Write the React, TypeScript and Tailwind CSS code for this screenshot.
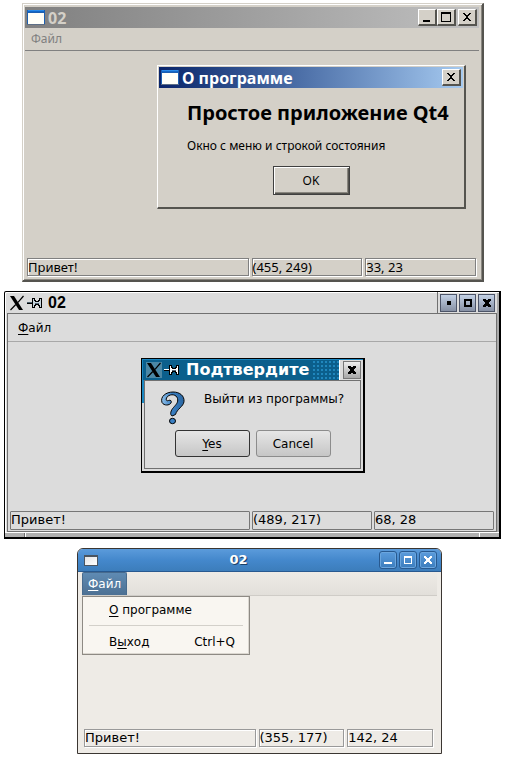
import type { ReactNode } from "react";

function MiniWindowIcon({ className }: { className: string }) {
  return (
    <svg viewBox="0 0 18 15" className={className} aria-hidden="true" shapeRendering="crispEdges">
      <rect width="18" height="15" fill="#1c5fb0" />
      <rect x="1" width="16" height="1" fill="#2a8ae8" />
      <rect x="1" y="1" width="16" height="1" fill="#1268c8" />
      <rect x="1" y="3" width="16" height="11" fill="#fffff8" />
      <rect y="14" width="18" height="1" fill="#5d6f86" />
    </svg>
  );
}

function XLogo({ className }: { className: string }) {
  return (
    <svg viewBox="0 0 16 16" className={className} aria-hidden="true">
      <path d="M1 1h4l9 14h-4z" fill="#000" />
      <path d="M14.5 1L9 7.3M6.8 9.5L1.5 15" stroke="#000" strokeWidth="1.2" fill="none" />
    </svg>
  );
}

function PinIcon({ dark }: { dark?: boolean }) {
  const light = dark ? "#fff" : "#c9d6de";
  return (
    <svg viewBox="0 0 15 10" className="h-[10px] w-[15px] shrink-0" aria-hidden="true" shapeRendering="crispEdges">
      <path d="M0 5h6v1H0z" fill="#000" />
      <path d="M0 4h6v1H0z" fill={dark ? "#fff" : "#4a5f6c"} />
      <path d="M5 0h3v2h1v1h2V2h1V0h3v10h-3V8h-1V7H9v1H8v2H5z" fill="#000" />
      <path d="M6 1h1v2h1v1h4V3h1V1h1v8h-1V7h-1V6H8v1H7v2H6z" fill={light} />
      <path d="M8 5h4v1H8z" fill="#567" />
    </svg>
  );
}

function QuestionIcon() {
  return (
    <svg viewBox="0 0 26 34" className="h-[34px] w-[26px] shrink-0" aria-hidden="true">
      <defs>
        <linearGradient id="q" x1="0" y1="0" x2="1" y2="0">
          <stop offset="0" stopColor="#8fc0ea" />
          <stop offset="0.45" stopColor="#3a80c4" />
          <stop offset="1" stopColor="#2a66a0" />
        </linearGradient>
      </defs>
      <path
        d="M11 12C9.500 14.500 4 15 2 11.500C0 5.500 6 1 13 1C20 1 24.500 5 24 10.500C23.500 15.500 17 18 15.500 23.500L12 25C9.500 23.500 11 19 13.500 16.500C16 13.500 18.500 11.500 17.500 7.500C16.500 3.500 11 2.500 7.500 5.500C5 8.500 6.500 10.500 8.500 9.500C10.500 8.500 12 10 11 12Z"
        fill="url(#q)"
        stroke="#000"
        strokeWidth="1"
      />
      <ellipse cx="12.500" cy="30" rx="3" ry="2.700" fill="#3a80c4" stroke="#000" />
    </svg>
  );
}

type Glyph = "min" | "max" | "close";

function ClassicButton({ glyph, label }: { glyph: Glyph; label: string }) {
  return (
    <button
      type="button"
      aria-label={label}
      className="flex h-[17px] w-[19px] items-center justify-center border-t border-r-2 border-b-2 border-l border-t-white border-r-[#55544f] border-b-[#55544f] border-l-white bg-[#d4d0c8]"
    >
      <svg viewBox="0 0 12 12" className="size-3 shrink-0" aria-hidden="true" shapeRendering="crispEdges">
        {glyph === "min" && <path d="M2 9h7v2H2z" />}
        {glyph === "max" && <path d="M1 1h10v10H1zM2 3v7h8V3z" fillRule="evenodd" />}
        {glyph === "close" && (
          <path d="M2 2h2v1h1v1h2V3h1V2h2v1H9v1H8v1H7v2h1v1h1v1h1v1H8V9H7V8H5v1H4v1H2V9h1V8h1V7h1V5H4V4H3V3H2z" />
        )}
      </svg>
    </button>
  );
}

function WmButton({ glyph, label, plain }: { glyph: Glyph; label: string; plain?: boolean }) {
  return (
    <button
      type="button"
      aria-label={label}
      className={
        plain
          ? "flex size-[18px] items-center justify-center border border-[#777] bg-linear-to-b from-[#eee] to-[#a8a8a8]"
          : "flex h-[18px] w-[17px] items-center justify-center border border-[#4c5468] bg-linear-to-b from-[#c4d2e6] to-[#8690a4]"
      }
    >
      <svg viewBox="0 0 8 8" className="size-2 shrink-0" aria-hidden="true" shapeRendering="crispEdges">
        {glyph === "min" && <path d="M2 2h4v4H2z" />}
        {glyph === "max" && <path d="M0 0h8v8H0zM2 2v4h4V2z" fillRule="evenodd" />}
        {glyph === "close" && <path d="M0 0h3v1h2V0h3v2H7v1H6v2h1v1h1v2H5V7H3v1H0V6h1V5h1V3H1V2H0z" />}
      </svg>
    </button>
  );
}

function BlueButton({ glyph, label }: { glyph: Glyph; label: string }) {
  return (
    <button
      type="button"
      aria-label={label}
      className="flex size-[18px] items-center justify-center rounded-[3px] border border-[#28598f] bg-linear-to-b from-[#5a9bdc] to-[#3c7dbd] shadow-[inset_0_0_0_1px_#6ba6de]"
    >
      <svg viewBox="0 0 8 8" className="size-2 shrink-0" aria-hidden="true" fill="#fff" shapeRendering="crispEdges">
        {glyph === "min" && <path d="M0 6h8v2H0z" />}
        {glyph === "max" && <path d="M0 0h8v8H0zM1 2v5h6V2z" fillRule="evenodd" />}
        {glyph === "close" && <path d="M0 0h2v1h1v1h2V1h1V0h2v2H7v1H6v2h1v1h1v2H6V7H5V6H3v1H2v1H0V6h1V5h1V3H1V2H0z" />}
      </svg>
    </button>
  );
}

function StatusBar({ items, cell, bar }: { items: string[]; cell: string; bar: string }) {
  return (
    <footer className={`grid grid-cols-[2fr_1fr_1fr] ${bar}`}>
      {items.map((text) => (
        <span key={text} className={`border whitespace-nowrap ${cell}`}>
          {text}
        </span>
      ))}
    </footer>
  );
}

function Mnemonic({ children }: { children: ReactNode }) {
  return <u className="underline decoration-1 underline-offset-2">{children}</u>;
}

function AboutDialog() {
  return (
    <div
      role="dialog"
      aria-label="О программе"
      className="absolute top-[61px] right-[16px] w-[309px] border-t border-r-2 border-b-2 border-l border-t-white border-r-[#55544f] border-b-[#55544f] border-l-white bg-[#d4d0c8] p-px pb-3 text-black"
    >
      <div className="flex h-[21px] items-center gap-[3px] bg-linear-to-r from-[#0a246a] to-[#a6caf0] pr-[2px] pl-[2px]">
        <MiniWindowIcon className="h-[15px] w-[18px]" />
        <h2 className="flex-1 text-[16px] leading-5 font-bold text-white">О программе</h2>
        <ClassicButton glyph="close" label="Закрыть" />
      </div>
      <div className="pl-7">
        <h3 className="mt-[11px] text-[20px] leading-7 font-bold whitespace-nowrap">Простое приложение Qt4</h3>
        <p className="mt-[9px] text-[12px] leading-5">Окно с меню и строкой состояния</p>
      </div>
      <div className="mt-[10px] flex justify-center">
        <button
          type="button"
          className="h-[29px] w-[77px] border border-[#404040] bg-[#d4d0c8] text-[12px] shadow-[inset_1px_1px_0_#fff,inset_-1px_-1px_0_#55544f,inset_-2px_-2px_0_#8a8780]"
        >
          OK
        </button>
      </div>
    </div>
  );
}

function ClassicWindow() {
  return (
    <section className="relative mr-[21px] ml-[22px] border-t border-r-2 border-b-2 border-l border-t-[#d4d0c8] border-r-[#55544f] border-b-[#55544f] border-l-[#d4d0c8] bg-[#d4d0c8] pr-[3px] pb-[4px] pl-[2px] font-['Noto_Sans','Open_Sans',sans-serif] shadow-[inset_1px_1px_0_#fff,inset_-1px_-1px_0_#8a8780]">
      <div className="mt-[3px] flex h-[21px] items-center bg-linear-to-r from-[#808080] to-[#c0c0c0] pr-[2px] pl-[2px]">
        <MiniWindowIcon className="h-[15px] w-[18px]" />
        <h1 className="ml-[3px] flex-1 text-[16px] leading-5 font-bold text-[#d4d0c8]">02</h1>
        <ClassicButton glyph="min" label="Свернуть" />
        <ClassicButton glyph="max" label="Развернуть" />
        <span className="w-[2px]" />
        <ClassicButton glyph="close" label="Закрыть" />
      </div>
      <nav className="flex h-[23px] items-center border-b border-[#808080] pl-[6px]">
        <button type="button" disabled className="text-[12px] leading-4 text-[#808080]">
          Файл
        </button>
      </nav>
      <div className="h-[207px]" />
      <StatusBar
        items={["Привет!", "(455, 249)", "33, 23"]}
        bar="ml-[2px] mr-[3px] gap-[3px]"
        cell="h-[18px] border-[#808080] text-[13px] leading-[17px] shadow-[1px_1px_0_#fff,inset_1px_1px_0_#fff]"
      />
      <AboutDialog />
    </section>
  );
}

function ConfirmDialog() {
  return (
    <div
      role="dialog"
      aria-label="Подтвердите"
      className="absolute top-[66px] left-[136px] w-[224px] border border-r-2 border-b-2 border-black bg-[#dcdcdc] bg-[linear-gradient(#1a86c0,#1a86c0)] bg-size-[2px_44px] bg-no-repeat pr-[2px] pb-[2px]"
    >
      <div className="-mr-[2px] flex h-[21px] items-stretch border-t border-l border-[#1a86c0] bg-[#0b5f8c]">
        <div className="flex min-w-0 flex-1 items-center pl-[3px]">
          <span className="bg-[#4b87a5]">
            <XLogo className="size-4" />
          </span>
          <span className="ml-[2px]">
            <PinIcon dark />
          </span>
          <h2 className="ml-[7px] text-[16px] leading-5 font-bold text-white">Подтвердите</h2>
          <span className="ml-[3px] h-5 flex-1 bg-[radial-gradient(#2087bd_1px,transparent_1px)] bg-size-[4px_4px]" />
        </div>
        <div className="flex w-6 items-center justify-center border-l border-white bg-[#dcdcdc]">
          <WmButton glyph="close" label="Закрыть" plain />
        </div>
      </div>
      <div className="ml-[2px] border border-[#707070] pt-[8px] pb-[11px]">
        <div className="flex pl-[15px]">
          <span className="mt-[2px]">
            <QuestionIcon />
          </span>
          <p className="ml-[18px] text-[12px] leading-5 whitespace-nowrap">Выйти из программы?</p>
        </div>
        <div className="mt-[5px] flex justify-center gap-[6px]">
          <button
            type="button"
            className="h-[27px] w-[75px] rounded-[3px] border border-[#333] bg-linear-to-b from-[#e6e6e6] to-[#c6c6c6] text-[12px]"
          >
            <Mnemonic>Y</Mnemonic>es
          </button>
          <button
            type="button"
            className="h-[27px] w-[75px] rounded-[3px] border border-[#8c8c8c] bg-linear-to-b from-[#e6e6e6] to-[#c6c6c6] text-[12px]"
          >
            Cancel
          </button>
        </div>
      </div>
    </div>
  );
}

function WmWindow() {
  return (
    <section className="relative mt-[9px] mr-1 ml-1 rounded-tl-[2px] border border-r-2 border-b-2 border-black bg-[#dcdcdc] font-['DejaVu_Sans',sans-serif] shadow-[inset_1px_1px_0_#fff,inset_-2px_0_0_#aaa]">
      <div className="flex h-[21px] items-center pr-[2px] pl-1">
        <XLogo className="size-4" />
        <span className="ml-[2px]">
          <PinIcon />
        </span>
        <h1 className="ml-[6px] flex-1 font-['Liberation_Sans',Arial,sans-serif] text-[16px] leading-5 font-bold">02</h1>
        <div className="flex h-full items-center gap-[2px] border-l border-[#707070] pt-[1px] pr-[2px] pl-[2px]">
          <WmButton glyph="min" label="Свернуть" />
          <WmButton glyph="max" label="Развернуть" />
          <WmButton glyph="close" label="Закрыть" />
        </div>
      </div>
      <div className="mr-[2px] ml-[2px] border border-[#707070] pb-[1px]">
        <nav className="flex h-[28px] items-center border-b border-[#a8a8a8] pl-[10px]">
          <button type="button" className="text-[12px] leading-4">
            <Mnemonic>Ф</Mnemonic>айл
          </button>
        </nav>
        <div className="h-[169px]" />
        <StatusBar
          items={["Привет!", "(489, 217)", "68, 28"]}
          bar="ml-[2px] mr-[2px] gap-[2px]"
          cell="h-[19px] rounded-[1px] border-[#777] text-[13px] leading-4"
        />
      </div>
      <div className="flex h-[5px] border-t border-white bg-[#b0b0b0]">
        <span className="w-5 border-r border-[#707070]" />
        <span className="flex-1 border-l border-white" />
        <span className="w-5 border-l border-white" />
      </div>
      <ConfirmDialog />
    </section>
  );
}

function FileMenu() {
  return (
    <div
      role="menu"
      aria-label="Файл"
      className="absolute top-[47px] left-1 w-[168px] border border-[#8e8a84] bg-[#f9f6f1] py-[2px] text-[12px] shadow-[inset_-1px_-1px_0_#dbd7d0]"
    >
      <button type="button" role="menuitem" className="flex h-[21px] w-full items-center pr-[14px] pl-[26px]">
        <span>
          <Mnemonic>О</Mnemonic> программе
        </span>
      </button>
      <hr className="mx-[6px] my-[5px] border-[#d3d0ca]" />
      <button type="button" role="menuitem" className="flex h-[21px] w-full items-center justify-between pr-[14px] pl-[26px]">
        <span>
          В<Mnemonic>ы</Mnemonic>ход
        </span>
        <span>Ctrl+Q</span>
      </button>
    </div>
  );
}

function BlueWindow() {
  return (
    <section className="relative mt-[9px] mr-[63px] ml-[77px] rounded-t-[6px] border border-[#3b3632] bg-[#eeebe6] font-['DejaVu_Sans',sans-serif]">
      <div className="flex h-[23px] items-center gap-[2px] rounded-t-[5px] border-b border-[#28598f] bg-linear-to-b from-[#5b9bdb] via-[#4488cc] to-[#3c7dbb] pr-1 pl-[6px]">
        <span className="h-[11px] w-[14px] border border-t-2 border-[#4b5560] bg-linear-to-br from-[#e4e4e4] to-white" />
        <h1 className="flex-1 text-center text-[13px] leading-4 font-bold text-white [text-shadow:1px_1px_0_#1d3f66]">02</h1>
        <BlueButton glyph="min" label="Свернуть" />
        <BlueButton glyph="max" label="Развернуть" />
        <BlueButton glyph="close" label="Закрыть" />
      </div>
      <nav className="mr-1 ml-1 flex h-[24px] items-end border-b border-[#cfccc7] bg-linear-to-b from-[#eeebe6] to-[#e2dfda]">
        <button
          type="button"
          aria-expanded="true"
          className="h-[23px] rounded-t-[2px] border border-b-0 border-[#486b8e] bg-linear-to-b from-[#5f8bb3] to-[#4d7093] px-[5px] text-[12px] leading-5 text-white"
        >
          <Mnemonic>Ф</Mnemonic>айл
        </button>
      </nav>
      <div className="h-[133px]" />
      <StatusBar
        items={["Привет!", "(355, 177)", "142, 24"]}
        bar="mb-[6px] ml-[6px] mr-[8px] gap-[3px]"
        cell="h-[18px] border-[#999] text-[13px] leading-4 shadow-[1px_1px_0_#fff,inset_1px_1px_0_#fff]"
      />
      <FileMenu />
    </section>
  );
}

export default function App() {
  return (
    <main className="min-h-screen bg-white pt-[3px] text-black">
      <ClassicWindow />
      <WmWindow />
      <BlueWindow />
    </main>
  );
}
